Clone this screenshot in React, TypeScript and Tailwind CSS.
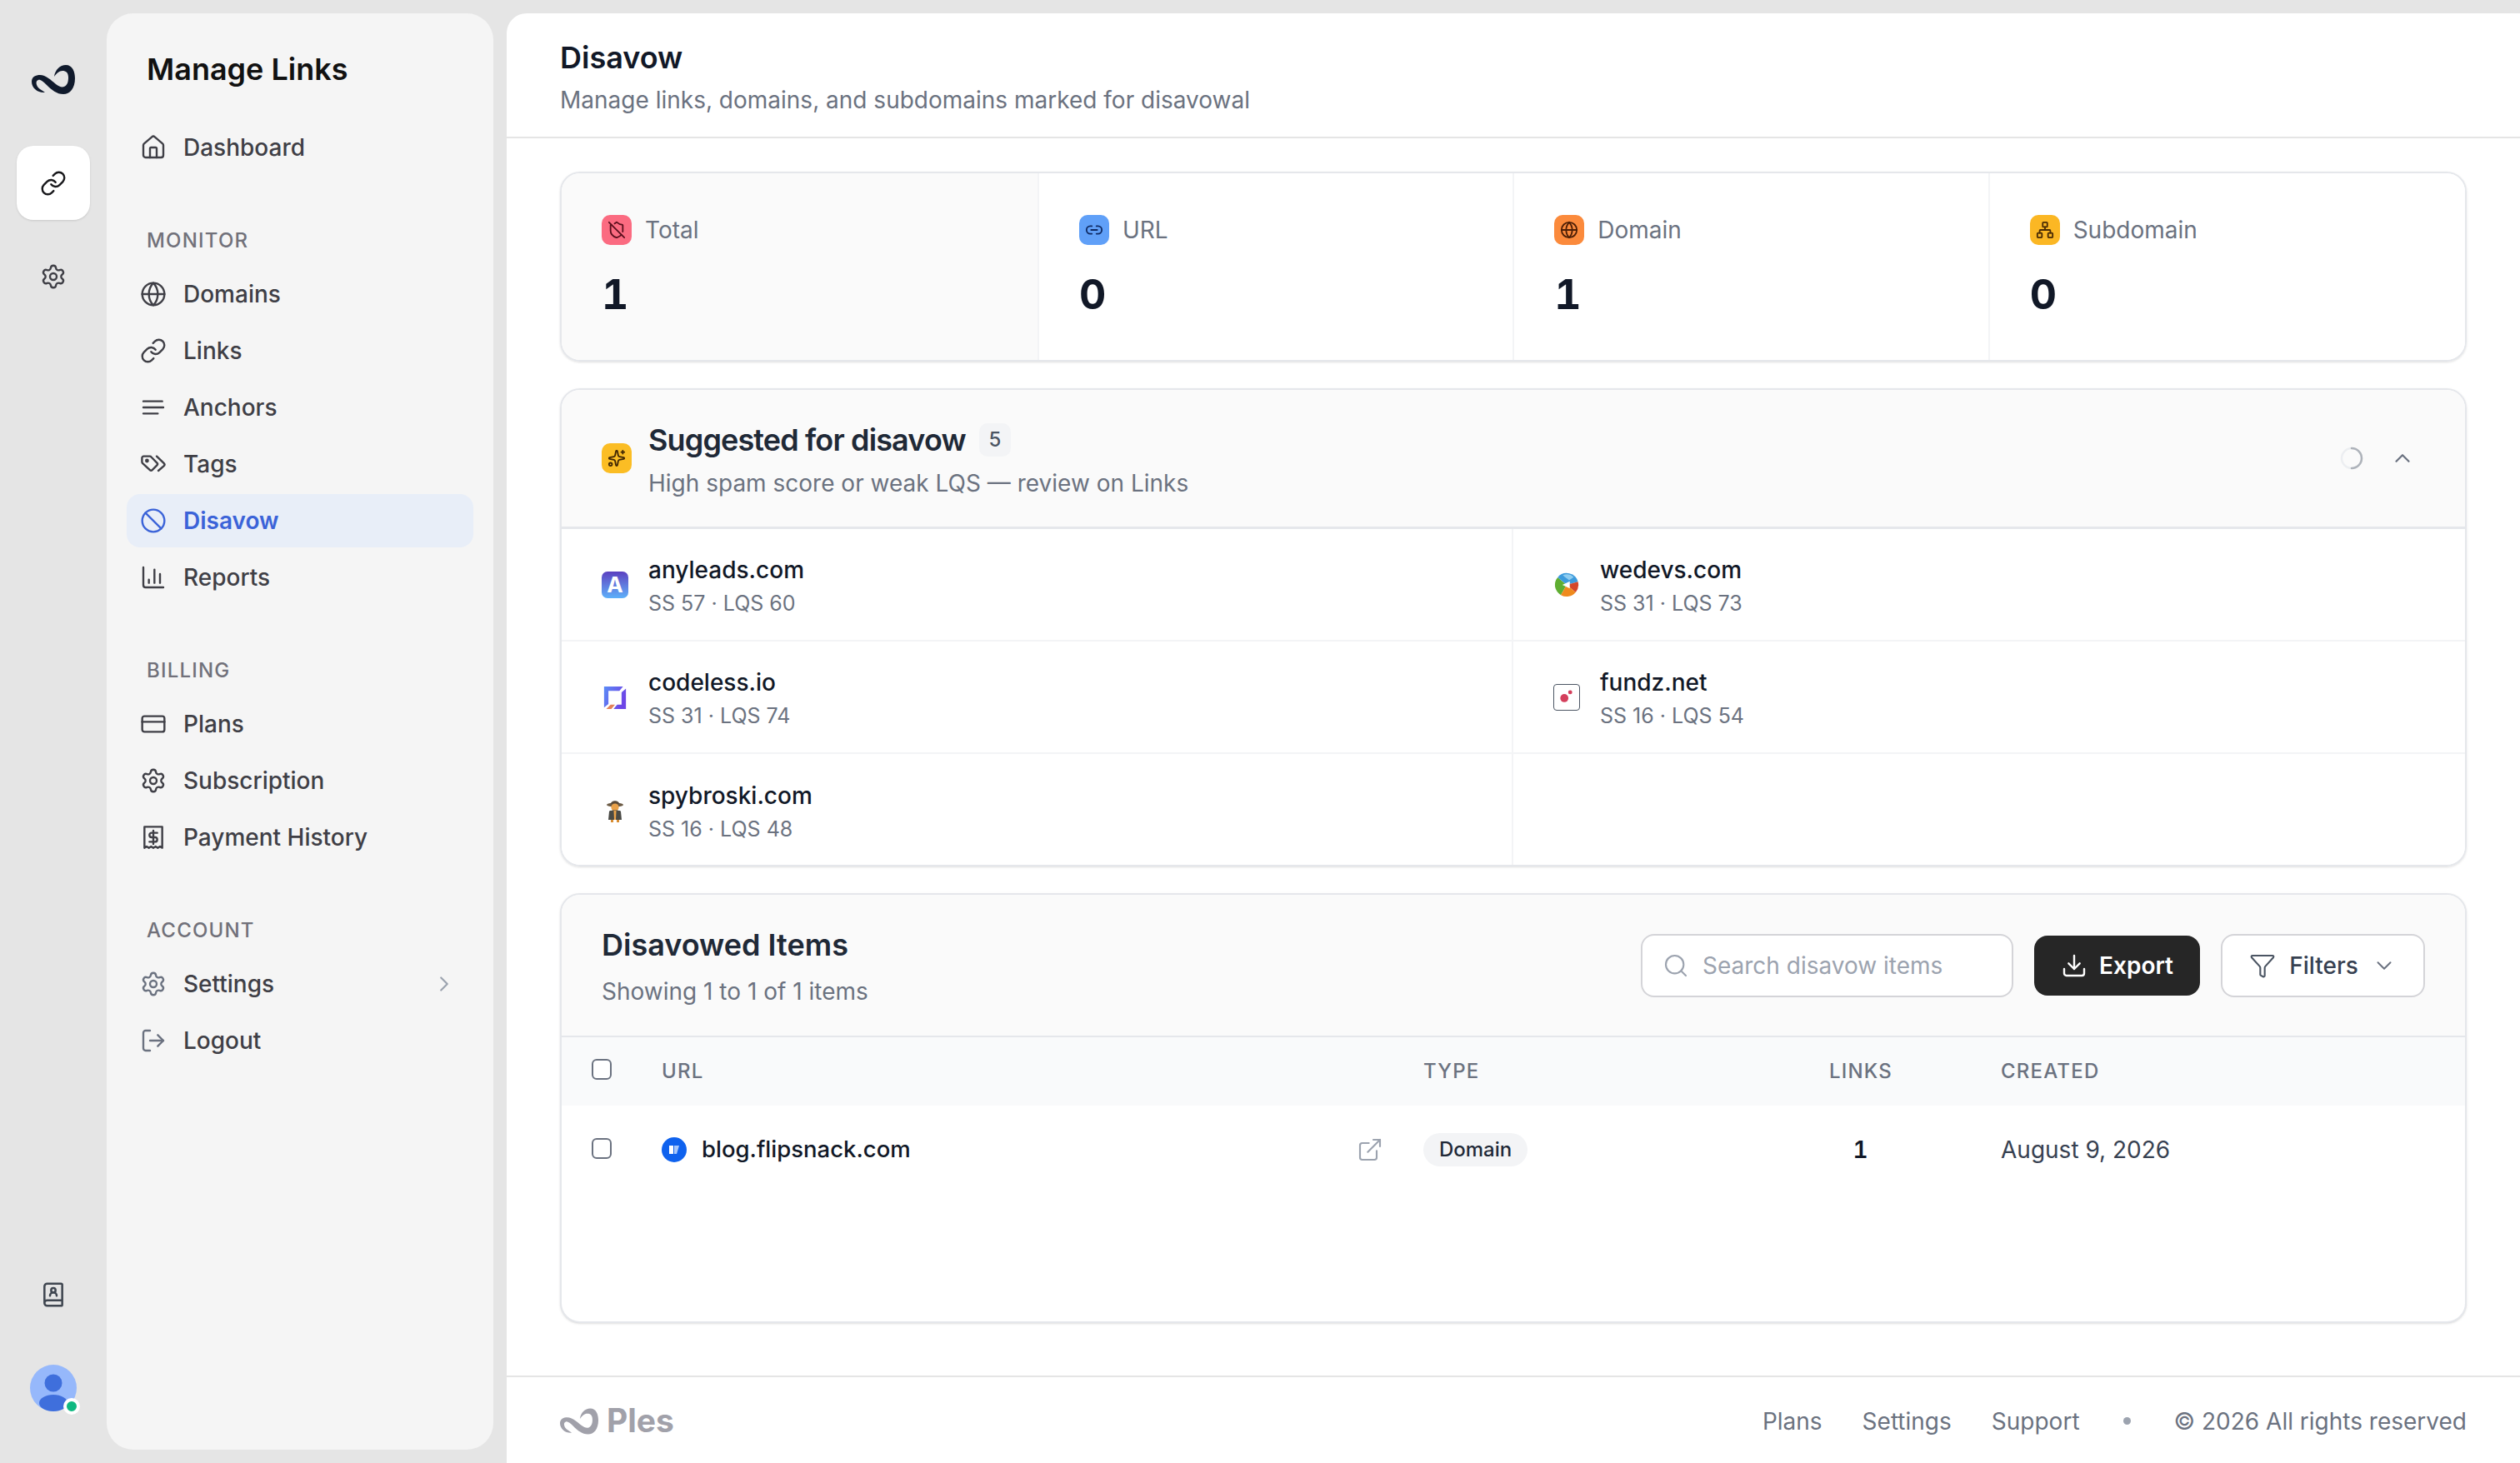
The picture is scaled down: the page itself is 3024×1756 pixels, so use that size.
import React from 'react';
import {
  Ban,
  BookUser,
  ChartColumn,
  ChevronDown,
  ChevronRight,
  ChevronUp,
  CreditCard,
  Download,
  ExternalLink,
  Funnel,
  Globe,
  House,
  Link,
  Link2,
  LogOut,
  Network,
  Search,
  Settings,
  ShieldOff,
  Sparkles,
} from 'lucide-react';

const LogoMark: React.FC<{ className?: string }> = ({ className }) => (
  <svg viewBox="0 0 52 35" className={className} fill="currentColor">
    <path d="M27 14C28 6 34 0 41 0C49 0 52 8 52 16C52 28 46 35 38 35C30 35 24 30 18 24C14 20 10 17 8 18C5 19 5 22 7 26C9 29 12 30 16 33C8 34 0 28 0 20C0 14 5 12 10 12C17 12 23 18 29 23C33 26 36 27 39 26C43 24 44 20 44 15C44 9 41 7 37 7C33 7 30 10 27 14Z" />
  </svg>
);

const AnchorsIcon: React.FC<{ className?: string; strokeWidth?: number }> = ({ className, strokeWidth }) => (
  <svg viewBox="0 0 24 24" className={className} fill="none" stroke="currentColor" strokeWidth={strokeWidth} strokeLinecap="round">
    <path d="M3 6.5h17M3 12h18M3 17.5h13" />
  </svg>
);

const TagsIcon: React.FC<{ className?: string; strokeWidth?: number }> = ({ className, strokeWidth }) => (
  <svg viewBox="0 0 24 24" className={className} fill="none" stroke="currentColor" strokeWidth={strokeWidth} strokeLinecap="round" strokeLinejoin="round">
    <path d="M1.8 6.5C1.8 5.7 2.5 5 3.3 5H8.8C9.3 5 9.8 5.2 10.1 5.6L15.3 11C15.9 11.6 15.9 12.5 15.3 13.1L11 17.4C10.4 18 9.5 18 8.9 17.4L2.4 11.3C2 10.9 1.8 10.4 1.8 9.9Z" />
    <circle cx="6.3" cy="9" r="0.9" />
    <path d="M15 5L21.6 11.4C22.2 12 22.2 13 21.6 13.6L16.5 18" />
  </svg>
);

const PaymentIcon: React.FC<{ className?: string; strokeWidth?: number }> = ({ className, strokeWidth }) => (
  <svg viewBox="0 0 24 24" className={className} fill="none" stroke="currentColor" strokeWidth={strokeWidth} strokeLinecap="round" strokeLinejoin="round">
    <path d="M4 2.5h16v19l-2-1.2-2 1.2-2-1.2-2 1.2-2-1.2-2 1.2-2-1.2-2 1.2z" />
    <path d="M15.5 8h-5a1.8 1.8 0 0 0 0 4h3a1.8 1.8 0 0 1 0 4h-5M12 6v12" />
  </svg>
);

const nav = [
  {
    title: 'MONITOR',
    items: [
      { label: 'Domains', icon: Globe },
      { label: 'Links', icon: Link },
      { label: 'Anchors', icon: AnchorsIcon },
      { label: 'Tags', icon: TagsIcon },
      { label: 'Disavow', icon: Ban, active: true },
      { label: 'Reports', icon: ChartColumn },
    ],
  },
  {
    title: 'BILLING',
    items: [
      { label: 'Plans', icon: CreditCard },
      { label: 'Subscription', icon: Settings },
      { label: 'Payment History', icon: PaymentIcon },
    ],
  },
  {
    title: 'ACCOUNT',
    items: [
      { label: 'Settings', icon: Settings, chevron: true, muted: true },
      { label: 'Logout', icon: LogOut, muted: true },
    ],
  },
];

const stats = [
  { label: 'Total', value: '1', icon: ShieldOff, tone: 'bg-[#fb6b81] text-[#5b0f1d]', cell: 'bg-[#fafafa]' },
  { label: 'URL', value: '0', icon: Link2, tone: 'bg-[#60a0f8] text-[#0f2a63]', cell: 'bg-white' },
  { label: 'Domain', value: '1', icon: Globe, tone: 'bg-[#fb8a3c] text-[#4d1f06]', cell: 'bg-white' },
  { label: 'Subdomain', value: '0', icon: Network, tone: 'bg-[#fbb724] text-[#4a2b04]', cell: 'bg-white' },
];

const AnyleadsIcon = () => (
  <div className="flex h-[32px] w-[32px] items-center justify-center rounded-[7px] bg-gradient-to-b from-[#5a3fc0] to-[#5cb0fa] text-[26px] leading-none font-bold text-white">
    A
  </div>
);

const WedevsIcon = () => (
  <svg viewBox="0 0 32 32" className="h-[30px] w-[30px]">
    <path d="M16 16L8.5 28.99A15 15 0 0 1 4.51 6.36Z" fill="#5fae31" />
    <path d="M16 16L4.51 6.36A15 15 0 0 1 30.49 12.12Z" fill="#3d9bdc" />
    <path d="M11 3.5A13 13 0 0 1 25 6L19 10C17 8 14 7 11 3.5Z" fill="#8fcdf0" />
    <path d="M16 16L30.49 12.12A15 15 0 0 1 27.49 25.64Z" fill="#d4472a" />
    <path d="M16 16L27.49 25.64A15 15 0 0 1 8.5 28.99Z" fill="#ef8a1d" />
    <path d="M20 11.5L10.5 16L20 20.5Z" fill="#ffffff" />
  </svg>
);

const CodelessIcon = () => (
  <svg viewBox="0 0 32 32" className="h-[28px] w-[28px]">
    <defs>
      <linearGradient id="codeless" x1="0" y1="0" x2="1" y2="0.4">
        <stop offset="0" stopColor="#5b8cf6" />
        <stop offset="1" stopColor="#6d45e6" />
      </linearGradient>
    </defs>
    <path d="M1 1H27L22 7H7V25L1 30ZM31 4V32H14L19 26H25V9Z" fill="url(#codeless)" />
    <path d="M4 32L10 26H16L11 32Z" fill="#e2825a" />
  </svg>
);

const FundzIcon = () => (
  <div className="flex h-[32px] w-[32px] items-center justify-center rounded-[4px] border border-[#4b5563]">
    <svg viewBox="0 0 32 32" className="h-[30px] w-[30px]">
      <circle cx="13" cy="17" r="5.2" fill="#d43f5c" />
      <circle cx="20.5" cy="9.5" r="2.6" fill="#d43f5c" />
    </svg>
  </div>
);

const SpyIcon = () => (
  <svg viewBox="0 0 32 32" className="h-[32px] w-[32px]">
    <ellipse cx="16" cy="9" rx="10" ry="2.6" fill="#6b5a45" />
    <path d="M11 8C11 3 21 3 21 8Z" fill="#5a4a38" />
    <circle cx="16" cy="12" r="4.6" fill="#eaa24a" />
    <path d="M9 17C9 15 23 15 23 17L24 27H8Z" fill="#4a4a45" />
    <path d="M14.5 16H17.5L17 27H15Z" fill="#eaa24a" />
    <path d="M11 27H14V30H11ZM18 27H21V30H18Z" fill="#d98d32" />
  </svg>
);

const FlipsnackIcon = () => (
  <div className="flex h-[30px] w-[30px] items-center justify-center rounded-full bg-[#0f62ee]">
    <svg viewBox="0 0 16 16" className="h-[16px] w-[16px]">
      <path d="M2 3h5v10H2z" fill="#ffffff" />
      <path d="M8 3h6l-3 10H8z" fill="#a9c8fb" />
    </svg>
  </div>
);

const suggestions = [
  { domain: 'anyleads.com', meta: 'SS 57 · LQS 60', icon: AnyleadsIcon },
  { domain: 'wedevs.com', meta: 'SS 31 · LQS 73', icon: WedevsIcon },
  { domain: 'codeless.io', meta: 'SS 31 · LQS 74', icon: CodelessIcon },
  { domain: 'fundz.net', meta: 'SS 16 · LQS 54', icon: FundzIcon },
  { domain: 'spybroski.com', meta: 'SS 16 · LQS 48', icon: SpyIcon },
];

const Rail = () => (
  <aside className="flex h-full w-[128px] shrink-0 flex-col items-center pt-[78px] pb-[62px]">
    <LogoMark className="h-[35px] w-[52px] text-[#101a2c]" />
    <div className="mt-[62px] flex h-[89px] w-[88px] items-center justify-center rounded-[20px] bg-white shadow-sm">
      <Link className="h-[32px] w-[32px] text-[#18181b]" strokeWidth={1.8} />
    </div>
    <Settings className="mt-[52px] h-[32px] w-[32px] text-[#3f3f46]" strokeWidth={1.8} />
    <BookUser className="mt-auto h-[32px] w-[32px] text-[#3f4650]" strokeWidth={1.9} />
    <div className="relative mt-[68px] h-[56px] w-[56px]">
      <svg viewBox="0 0 56 56" className="h-[56px] w-[56px]">
        <circle cx="28" cy="28" r="28" fill="#96b8fb" />
        <circle cx="28" cy="22" r="10.5" fill="#3f6fdc" />
        <ellipse cx="28" cy="46" rx="17" ry="10" fill="#3f6fdc" />
      </svg>
      <span className="absolute right-[-4px] bottom-[-4px] h-[20px] w-[20px] rounded-full border-[4px] border-white bg-[#10b981]" />
    </div>
  </aside>
);

const NavRow: React.FC<{
  label: string;
  icon: React.ElementType;
  active?: boolean;
  chevron?: boolean;
  muted?: boolean;
}> = ({ label, icon: Icon, active, chevron, muted }) => (
  <div
    className={`flex h-[64px] items-center gap-[20px] rounded-[16px] pr-[20px] pl-[16px] ${
      active ? 'bg-[#e8eef8] text-[#3b63d8]' : 'text-[#3f3f46]'
    }`}
  >
    <Icon className={`h-[32px] w-[32px] shrink-0 ${muted ? 'text-[#6b7280]' : ''}`} strokeWidth={1.8} />
    <span className={`flex-1 text-[28px] leading-[40px] ${active ? 'font-semibold' : 'font-medium'}`}>{label}</span>
    {chevron && <ChevronRight className="h-[30px] w-[30px] text-[#9ca3af]" strokeWidth={1.8} />}
  </div>
);

const Sidebar = () => (
  <nav className="my-[16px] flex w-[464px] shrink-0 flex-col rounded-[32px] bg-[#f5f5f5] px-[24px] pt-[47px]">
    <h2 className="px-[24px] text-[36px] leading-[40px] font-semibold text-[#111111]">Manage Links</h2>
    <div className="mt-[42px]">
      <NavRow label="Dashboard" icon={House} />
    </div>
    {nav.map((group) => (
      <section key={group.title} className="mt-[64px]">
        <p className="mb-[16px] px-[24px] text-[24px] leading-[32px] font-medium tracking-[0.05em] text-[#71717a]">
          {group.title}
        </p>
        <div className="flex flex-col gap-[4px]">
          {group.items.map((item) => (
            <NavRow key={item.label} {...item} />
          ))}
        </div>
      </section>
    ))}
  </nav>
);

const StatsCard = () => (
  <div className="grid h-[228px] shrink-0 grid-cols-[573px_1fr_1fr_1fr] divide-x-2 divide-[#f3f4f6] overflow-hidden rounded-[24px] border-2 border-[#e5e7eb] shadow-sm">
    {stats.map((stat) => (
      <div key={stat.label} className={`pt-[50px] pl-[48px] ${stat.cell}`}>
        <div className="flex items-center gap-[16px]">
          <span className={`flex h-[36px] w-[36px] items-center justify-center rounded-[10px] ${stat.tone}`}>
            <stat.icon className="h-[22px] w-[22px]" strokeWidth={2} />
          </span>
          <span className="text-[28px] leading-[36px] text-[#6b7280]">{stat.label}</span>
        </div>
        <p className="mt-[31px] text-[50px] leading-[56px] font-bold text-[#111827] tabular-nums">{stat.value}</p>
      </div>
    ))}
  </div>
);

const SuggestedCard = () => (
  <div className="h-[574px] shrink-0 overflow-hidden rounded-[24px] border-2 border-[#e5e7eb] shadow-sm">
    <div className="flex h-[167px] items-center gap-[20px] border-b-[3px] border-[#e5e7eb] bg-[#fafafa] pr-[60px] pl-[48px]">
      <span className="flex h-[36px] w-[36px] items-center justify-center rounded-[10px] bg-[#fbbd24] text-[#3f2504]">
        <Sparkles className="h-[22px] w-[22px]" strokeWidth={2} />
      </span>
      <div className="flex-1 pt-[6px]">
        <div className="flex items-center gap-[16px]">
          <h3 className="text-[36px] leading-[44px] font-semibold tracking-[-0.024em] text-[#1f2937]">Suggested for disavow</h3>
          <span className="flex h-[40px] w-[38px] items-center justify-center rounded-[10px] bg-[#f3f4f6] text-[24px] font-medium text-[#4b5563]">
            5
          </span>
        </div>
        <p className="mt-[10px] text-[28px] leading-[40px] text-[#6b7280]">High spam score or weak LQS — review on Links</p>
      </div>
      <svg viewBox="0 0 32 32" className="h-[32px] w-[32px]" fill="none" strokeWidth="2.5">
        <circle cx="16" cy="16" r="12" stroke="#eceef1" />
        <path d="M16 4A12 12 0 0 1 16 28" stroke="#aeb3ba" strokeLinecap="round" />
      </svg>
      <ChevronUp className="ml-[10px] h-[30px] w-[30px] text-[#6b7280]" strokeWidth={1.8} />
    </div>
    <div className="grid grid-cols-2 bg-white">
      {[...suggestions, null].map((row, i) => (
        <div
          key={row ? row.domain : 'empty'}
          className={`flex h-[135px] items-center gap-[24px] px-[48px] ${i < 4 ? 'border-b-2 border-[#f3f4f6]' : ''} ${
            i % 2 === 0 ? 'border-r-2 border-r-[#f3f4f6]' : ''
          }`}
        >
          {row && (
            <>
              <span className="flex h-[32px] w-[32px] shrink-0 items-center justify-center">
                <row.icon />
              </span>
              <div className="pt-[3px]">
                <p className="text-[28px] leading-[36px] font-medium text-[#111827]">{row.domain}</p>
                <p className="mt-[6px] text-[25px] leading-[32px] text-[#6b7280]">{row.meta}</p>
              </div>
            </>
          )}
        </div>
      ))}
    </div>
  </div>
);

const CheckBox = () => (
  <input
    type="checkbox"
    aria-label="Select"
    className="h-[25px] w-[24px] appearance-none rounded-[6px] border-2 border-[#6b7280] bg-white"
  />
);

const TABLE_COLS = 'grid grid-cols-[120px_914px_487px_75px_1fr]';

const ItemsCard = () => (
  <div className="flex h-[516px] shrink-0 flex-col overflow-hidden rounded-[24px] border-2 border-[#e5e7eb] bg-white shadow-sm">
    <div className="flex h-[171px] shrink-0 items-center justify-between border-b-2 border-[#e5e7eb] bg-[#fafafa] px-[48px]">
      <div className="pt-[4px]">
        <h3 className="text-[36px] leading-[44px] font-semibold text-[#1f2937]">Disavowed Items</h3>
        <p className="mt-[14px] text-[28px] leading-[40px] text-[#6b7280]">Showing 1 to 1 of 1 items</p>
      </div>
      <div className="flex items-center gap-[25px]">
        <label className="flex h-[76px] w-[447px] items-center gap-[16px] rounded-[16px] border-2 border-[#d4d4d8] bg-white px-[24px]">
          <Search className="h-[32px] w-[32px] shrink-0 text-[#9ca3af]" strokeWidth={1.6} />
          <input
            placeholder="Search disavow items"
            className="min-w-0 flex-1 bg-transparent text-[28px] text-[#111827] outline-none placeholder:text-[#9ca3af]"
          />
        </label>
        <button className="flex h-[72px] w-[199px] items-center justify-center gap-[14px] rounded-[16px] bg-[#262626] text-[28px] font-semibold text-white">
          <Download className="h-[32px] w-[32px]" strokeWidth={1.8} />
          Export
        </button>
        <button className="flex h-[76px] w-[245px] items-center justify-center gap-[16px] rounded-[16px] border-2 border-[#d4d4d8] bg-white text-[28px] font-medium text-[#374151]">
          <Funnel className="h-[32px] w-[32px] text-[#4b5563]" strokeWidth={1.6} />
          Filters
          <ChevronDown className="h-[30px] w-[30px] text-[#6b7280]" strokeWidth={1.6} />
        </button>
      </div>
    </div>
    <div className={`${TABLE_COLS} h-[82px] shrink-0 items-center bg-[#f9fafb] text-[24px] font-medium tracking-[0.05em] text-[#6b7280]`}>
      <div className="flex pb-[6px] pl-[36px]">
        <CheckBox />
      </div>
      <span>URL</span>
      <span>TYPE</span>
      <span className="text-center">LINKS</span>
      <span className="pl-[131px]">CREATED</span>
    </div>
    <div className={`${TABLE_COLS} h-[106px] shrink-0 items-center`}>
      <div className="flex pb-[4px] pl-[36px]">
        <CheckBox />
      </div>
      <div className="flex items-center gap-[18px] pr-[48px]">
        <FlipsnackIcon />
        <span className="flex-1 text-[27.5px] font-medium text-[#111827]">blog.flipsnack.com</span>
        <ExternalLink className="h-[32px] w-[32px] text-[#9ca3af]" strokeWidth={1.6} />
      </div>
      <div>
        <span className="inline-flex h-[40px] w-[125px] items-center justify-center rounded-full bg-[#f3f4f6] text-[24px] font-medium text-[#1f2937]">
          Domain
        </span>
      </div>
      <span className="text-center text-[28px] font-semibold text-[#111827] tabular-nums">1</span>
      <span className="pl-[131px] text-[28px] text-[#374151]">August 9, 2026</span>
    </div>
  </div>
);

const Footer = () => (
  <footer className="flex h-[105px] shrink-0 items-center justify-between border-t-2 border-[#e5e5e5] px-[64px] pt-[2px]">
    <div className="flex items-center gap-[10px] text-[#a1a1aa]">
      <LogoMark className="h-[32px] w-[46px]" />
      <span className="text-[39px] font-bold">Ples</span>
    </div>
    <div className="flex items-center gap-[48px] text-[28px] text-[#6b7280]">
      <span>Plans</span>
      <span>Settings</span>
      <span>Support</span>
      <span className="mx-[4px] h-[9px] w-[9px] rounded-full bg-[#9ca3af]" />
      <span>© 2026 All rights reserved</span>
    </div>
  </footer>
);

const App: React.FC = () => {
  return (
    <div className="flex h-[1756px] w-[3024px] overflow-hidden bg-[#e5e5e5] font-[Inter,sans-serif]">
      <Rail />
      <Sidebar />
      <main className="mt-[16px] ml-[16px] flex min-w-0 flex-1 flex-col rounded-tl-[24px] bg-white">
        <header className="h-[150px] shrink-0 border-b-2 border-[#e5e5e5] px-[64px] pt-[31px]">
          <h1 className="text-[36px] leading-[44px] font-semibold text-[#111827]">Disavow</h1>
          <p className="mt-[9px] text-[28px] leading-[40px] text-[#6b7280]">Manage links, domains, and subdomains marked for disavowal</p>
        </header>
        <div className="flex min-h-0 flex-1 flex-col gap-[32px] px-[64px] pt-[40px]">
          <StatsCard />
          <SuggestedCard />
          <ItemsCard />
        </div>
        <Footer />
      </main>
    </div>
  );
};

export default App;
